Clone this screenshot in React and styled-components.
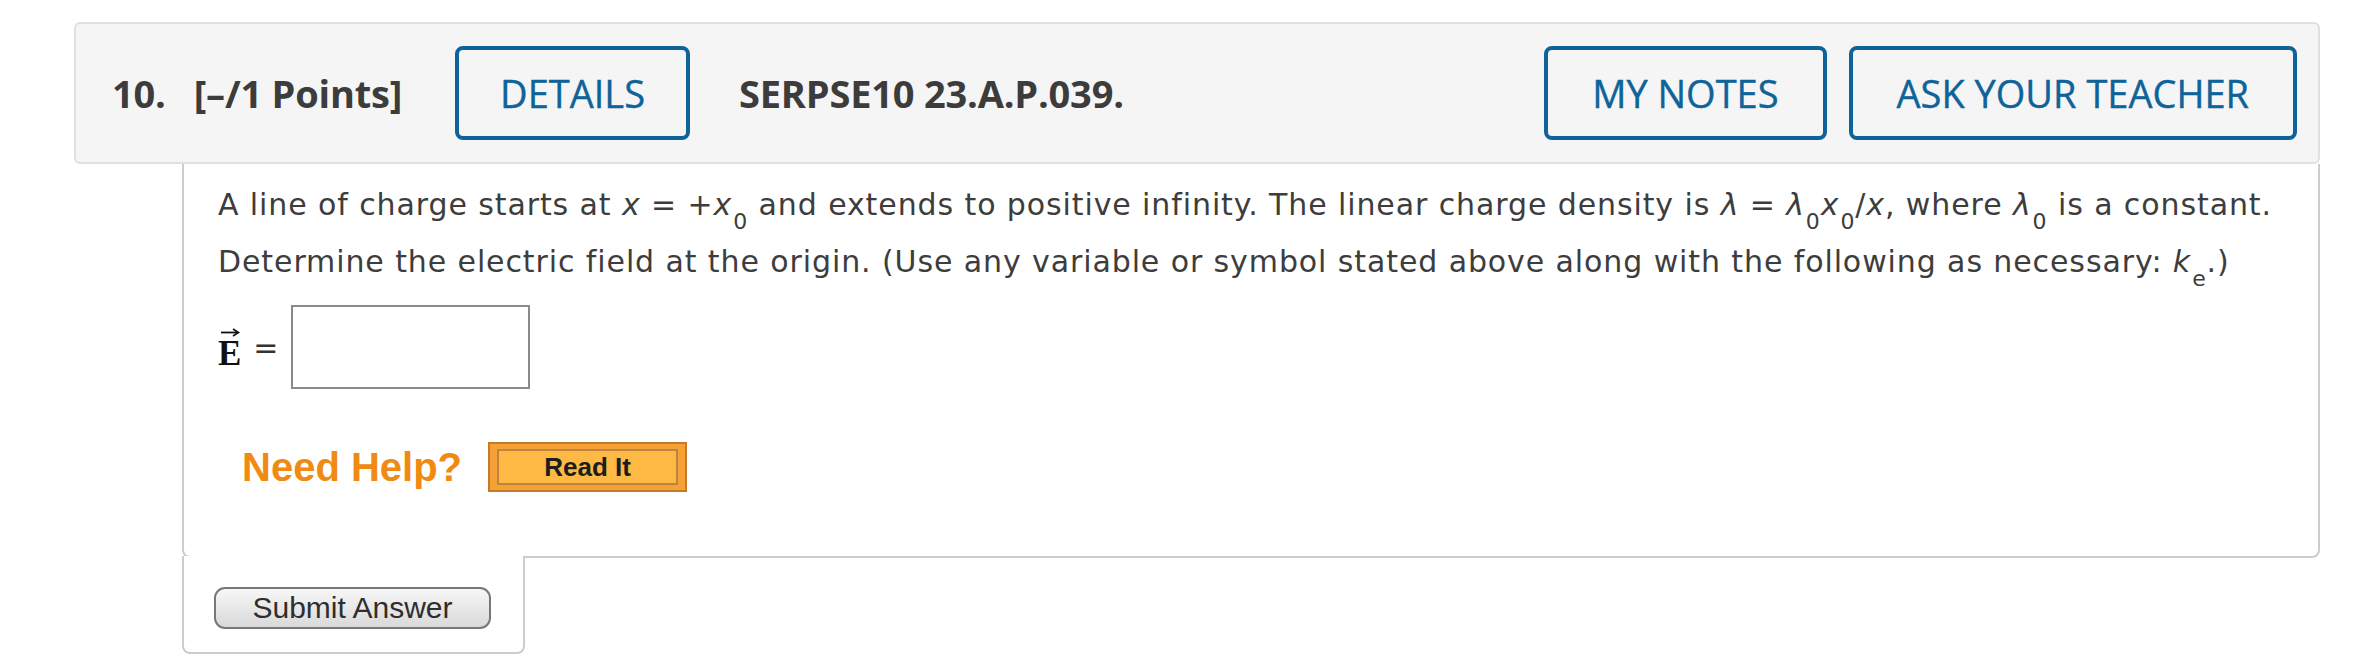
import React from "react";
import styled, { createGlobalStyle } from "styled-components";

const GlobalStyle = createGlobalStyle`
  body {
    margin: 0;
    background: #ffffff;
  }
`;

const Page = styled.div`
  padding: 22px 40px 0 74px;
`;

//header bar
const Header = styled.div`
  height: 142px;
  box-sizing: border-box;
  display: flex;
  align-items: center;
  padding: 0 21px 0 36px;
  background: #f5f5f5;
  border: 2px solid #e0e0e0;
  border-radius: 6px;
  font-family: "Open Sans", sans-serif;
  color: #3c3c3c;
`;

const Label = styled.span`
  font-size: 38px;
  font-weight: 700;
  letter-spacing: -0.2px;
  margin-left: ${(p) => p.$gap || 0}px;
  white-space: nowrap;
`;

const Spacer = styled.div`
  flex: 1;
`;

const OutlineButton = styled.button`
  height: 94px;
  box-sizing: border-box;
  margin-left: ${(p) => p.$gap || 0}px;
  padding: 0 ${(p) => p.$pad || 44}px;
  border: 4px solid #0e6399;
  border-radius: 8px;
  background: transparent;
  color: #0e6399;
  font-family: "Open Sans", sans-serif;
  font-size: 38px;
  font-weight: 400;
  -webkit-text-stroke: 0.4px #0e6399;
  white-space: nowrap;
  cursor: pointer;
`;

//question body
const Panel = styled.div`
  margin-left: 108px;
  padding: 12px 34px 64px;
  border: 2px solid #cccccc;
  border-top: none;
  border-radius: 0 0 8px 8px;
  font-family: "DejaVu Sans", Verdana, sans-serif;
  font-size: 30px;
  color: #3d3d3d;
`;

const Problem = styled.p`
  margin: 0;
  line-height: 57px;
  letter-spacing: 0.9px;

  i {
    font-style: italic;
  }

  sub {
    font-size: 22px;
    line-height: 0;
    vertical-align: -14px;
    margin-left: 1px;
  }
`;

const AnswerRow = styled.div`
  display: flex;
  align-items: center;
  margin-top: 15px;
  height: 84px;
`;

const Vector = styled.span`
  position: relative;
  font-family: "Liberation Serif", "Times New Roman", serif;
  font-weight: 700;
  font-size: 35px;
  color: #111;
  margin-top: 14px;

  svg {
    position: absolute;
    left: 2px;
    top: -6px;
  }
`;

const Equals = styled.span`
  margin: 0 12px 0 12px;
  color: #333;
`;

const AnswerInput = styled.input`
  width: 239px;
  height: 84px;
  box-sizing: border-box;
  border: 2px solid #8a8a8a;
  background: #fff;
`;

const HelpRow = styled.div`
  display: flex;
  align-items: center;
  margin-top: 53px;
  padding-left: 24px;
`;

const NeedHelp = styled.span`
  font-family: "Liberation Sans", Arial, sans-serif;
  font-weight: 700;
  font-size: 40px;
  color: #f08a12;
`;

const ReadIt = styled.button`
  width: 199px;
  height: 50px;
  box-sizing: border-box;
  margin-left: 26px;
  padding: 5px 7px;
  border: 2px solid #c47a2c;
  background: #f7a033;
  cursor: pointer;

  span {
    display: flex;
    align-items: center;
    justify-content: center;
    height: 100%;
    box-sizing: border-box;
    border: 2px solid #bb8440;
    background: #fdb943;
    font-family: "Liberation Sans", Arial, sans-serif;
    font-weight: 700;
    font-size: 26px;
    color: #1d1d1d;
  }
`;

const SubmitTab = styled.div`
  position: relative;
  width: 343px;
  height: 98px;
  box-sizing: border-box;
  margin: -2px 0 0 108px;
  padding: 31px 0 0 30px;
  border: 2px solid #cccccc;
  border-top: none;
  border-radius: 0 0 8px 8px;
  background: #ffffff;
`;

const SubmitButton = styled.button`
  width: 277px;
  height: 42px;
  box-sizing: border-box;
  border: 2px solid #777777;
  border-radius: 11px;
  background: linear-gradient(#f7f7f7, #d9d9d9);
  font-family: "Liberation Sans", Arial, sans-serif;
  font-size: 30px;
  color: #2e2e2e;
  line-height: 1;
  cursor: pointer;
`;

const Arrow = () => (
  <svg width="20" height="9" viewBox="0 0 20 9">
    <line x1="1" y1="4.5" x2="17" y2="4.5" stroke="#111" strokeWidth="1.8" />
    <path d="M13 1 L18.5 4.5 L13 8" fill="none" stroke="#111" strokeWidth="1.6" />
  </svg>
);

const App = () => {
  return (
    <Page>
      <GlobalStyle />
      <Header>
        <Label>10.</Label>
        <Label $gap={28}>[–/1 Points]</Label>
        <OutlineButton $gap={53} $pad={41}>
          DETAILS
        </OutlineButton>
        <Label $gap={49}>SERPSE10 23.A.P.039.</Label>
        <Spacer />
        <OutlineButton>MY NOTES</OutlineButton>
        <OutlineButton $gap={22}>ASK YOUR TEACHER</OutlineButton>
      </Header>
      <Panel>
        <Problem>
          A line of charge starts at <i>x</i> = +<i>x</i>
          <sub>0</sub> and extends to positive infinity. The linear charge
          density is <i>λ</i> = <i>λ</i>
          <sub>0</sub>
          <i>x</i>
          <sub>0</sub>/<i>x</i>, where <i>λ</i>
          <sub>0</sub> is a constant.
          <br />
          Determine the electric field at the origin. (Use any variable or
          symbol stated above along with the following as necessary:{" "}
          <i>k</i>
          <sub>e</sub>.)
        </Problem>
        <AnswerRow>
          <Vector>
            <Arrow />E
          </Vector>
          <Equals>=</Equals>
          <AnswerInput type="text" />
        </AnswerRow>
        <HelpRow>
          <NeedHelp>Need Help?</NeedHelp>
          <ReadIt>
            <span>Read It</span>
          </ReadIt>
        </HelpRow>
      </Panel>
      <SubmitTab>
        <SubmitButton>Submit Answer</SubmitButton>
      </SubmitTab>
    </Page>
  );
};

export default App;
